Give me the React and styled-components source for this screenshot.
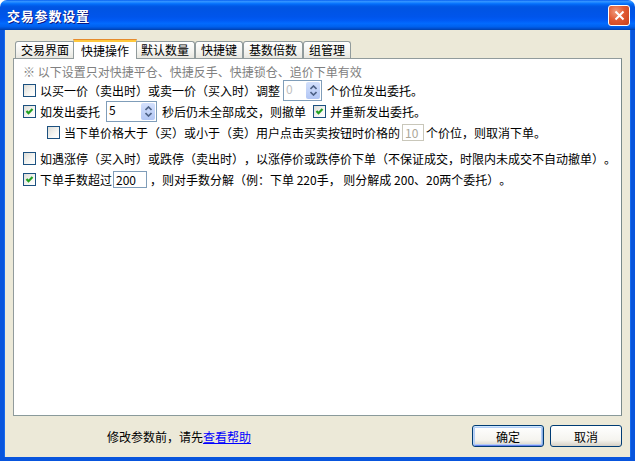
import React from 'react';
import styled, { createGlobalStyle, css } from 'styled-components';

const GlobalStyle = createGlobalStyle`
  html, body {
    margin: 0;
    padding: 0;
    background: #ffffff;
  }
  body {
    font-family: "Noto Sans CJK SC", "Liberation Sans", sans-serif;
    font-size: 12px;
    color: #000;
    text-spacing-trim: space-all;
  }
`;

const Window = styled.div`
  width: 635px;
  height: 461px;
  display: flex;
  flex-direction: column;
  box-sizing: border-box;
`;

const TitleBar = styled.div`
  height: 30px;
  flex: none;
  display: flex;
  align-items: center;
  justify-content: space-between;
  padding: 0 5px 0 7px;
  border-radius: 7px 7px 0 0;
  background: linear-gradient(
    to bottom,
    #0058ee 0%,
    #3593ff 4%,
    #288eff 7%,
    #127dff 10%,
    #036ffc 13%,
    #0262ee 17%,
    #0057e5 22%,
    #0054e3 28%,
    #0055eb 56%,
    #005bf5 68%,
    #026afe 78%,
    #0062ef 88%,
    #0052d6 94%,
    #0040ab 100%
  );
`;

const Title = styled.span`
  color: #fff;
  font-weight: bold;
  font-size: 13px;
  letter-spacing: 0.8px;
  text-shadow: 1px 1px 0 #0a1883;
`;

const CloseButton = styled.div`
  width: 22px;
  height: 21px;
  margin-top: 1px;
  border: 1px solid #fff;
  border-radius: 3px;
  box-sizing: border-box;
  background: radial-gradient(circle at 35% 30%, #f09a7c 0%, #e15a33 45%, #c8401a 100%);
  display: flex;
  align-items: center;
  justify-content: center;
`;

const Body = styled.div`
  flex: 1;
  display: flex;
  flex-direction: column;
  background: #ece9d8;
  border: 4px solid #0855dd;
  border-top: none;
  box-shadow: inset 1px 0 0 #166aee, inset -1px 0 0 #166aee;
  padding: 9px 9px 0 9px;
  min-height: 0;
`;

const TabStrip = styled.div`
  display: flex;
  align-items: flex-end;
  height: 19px;
  padding-left: 2px;
  position: relative;
  z-index: 1;
`;

const Tab = styled.div`
  height: 16px;
  line-height: 16px;
  padding: 0 5px;
  border: 1px solid #919b9c;
  border-bottom: none;
  border-radius: 3px 3px 0 0;
  background: linear-gradient(to bottom, #ffffff, #f3f3ef 60%, #e8e7e0);
  white-space: nowrap;

  ${(p) =>
    p.$active &&
    css`
      line-height: 18px;
      padding: 0 7px;
      margin: 0 -2px -1px;
      border-top: 3px solid #ffc83c;
      background: #fff;
      position: relative;
      z-index: 2;
      height: 17px;
      &::before {
        content: '';
        position: absolute;
        left: -1px;
        right: -1px;
        top: -3px;
        height: 1px;
        background: #e68b2c;
        border-radius: 3px 3px 0 0;
      }
    `}
`;

const Panel = styled.div`
  height: 358px;
  box-sizing: border-box;
  background: #fff;
  border: 1px solid #919b9c;
  border-right-color: #7a8a8b;
  border-bottom-color: #8a9a9b;
  padding: 5px 0 0 9px;
  display: flex;
  flex-direction: column;
`;

const Note = styled.div`
  height: 16px;
  line-height: 16px;
  color: #808080;
  white-space: nowrap;
`;

const Row = styled.div`
  display: flex;
  align-items: center;
  height: ${(p) => p.$h || 21}px;
  margin-left: ${(p) => p.$indent || 0}px;
  margin-top: ${(p) => p.$gap || 0}px;
  white-space: nowrap;
`;

const Box = styled.span`
  width: 13px;
  height: 13px;
  flex: none;
  box-sizing: border-box;
  border: 1px solid #1c5180;
  background: linear-gradient(135deg, #dcdcd7 0%, #f6f6f3 60%, #ffffff 100%);
  margin: 0 4px 0 ${(p) => p.$ml || 0}px;
  display: flex;
  align-items: center;
  justify-content: center;
`;

const Check = ({ checked, ml }) => (
  <Box $ml={ml}>
    {checked && (
      <svg width="9" height="9" viewBox="0 0 9 9">
        <path d="M1.5 4 L3.5 6.2 L7.5 2" fill="none" stroke="#21a121" strokeWidth="2.2" />
      </svg>
    )}
  </Box>
);

const SpinWrap = styled.span`
  display: inline-flex;
  height: 21px;
  box-sizing: border-box;
  border: 1px solid #7f9db9;
  background: #fff;
  margin: 0 ${(p) => p.$mr}px 0 ${(p) => p.$ml}px;
`;

const SpinText = styled.span`
  width: ${(p) => p.$w}px;
  padding-left: 2px;
  line-height: 15px;
  font-size: 12px;
  color: ${(p) => (p.$disabled ? '#c0c0c0' : '#000')};
  box-sizing: border-box;
`;

const SpinButton = styled.span`
  width: 14px;
  margin: 1px;
  border-radius: 2px;
  background: linear-gradient(to bottom, #d3e0fc, #b2c6f4);
  display: flex;
  align-items: center;
  justify-content: center;
`;

const Spinner = ({ value, textWidth, disabled, ml, mr }) => (
  <SpinWrap $ml={ml} $mr={mr}>
    <SpinText $w={textWidth} $disabled={disabled}>
      {value}
    </SpinText>
    <SpinButton>
      <svg width="7" height="11" viewBox="0 0 7 11">
        <path d="M0.5 4 L3.5 1 L6.5 4 M0.5 7 L3.5 10 L6.5 7" fill="none" stroke="#4d6185" strokeWidth="1.6" />
      </svg>
    </SpinButton>
  </SpinWrap>
);

const Field = styled.span`
  display: inline-block;
  width: ${(p) => p.$w}px;
  height: ${(p) => p.$h}px;
  line-height: ${(p) => p.$h - 2}px;
  box-sizing: border-box;
  border: 1px solid ${(p) => (p.$disabled ? '#c9c7ba' : '#7f9db9')};
  padding-left: 2px;
  color: ${(p) => (p.$disabled ? '#aca899' : '#000')};
  margin: 0 ${(p) => p.$mr}px 0 ${(p) => p.$ml}px;
`;

const Footer = styled.div`
  flex: 1;
  display: flex;
  align-items: center;
  padding-bottom: 1px;
`;

const Hint = styled.span`
  margin-left: 94px;
`;

const HelpLink = styled.a`
  color: #0000ff;
  text-decoration: underline;
  cursor: pointer;
`;

const Buttons = styled.div`
  margin-left: auto;
  display: flex;
  gap: 6px;
`;

const Button = styled.button`
  width: 72px;
  height: 22px;
  font-family: inherit;
  font-size: 12px;
  color: #000;
  border: 1px solid #003c74;
  border-radius: 3px;
  background: linear-gradient(to bottom, #ffffff 0%, #f5f4ef 70%, #d6d0c5 100%);
  padding: 0;
  ${(p) =>
    p.$default &&
    css`
      box-shadow: inset 0 1px 0 #cee7ff, inset 1px 0 0 #bcd4f6, inset -1px 0 0 #89ade4,
        inset 0 -1px 0 #6982ee, inset 0 0 0 2px #b3cdf6;
    `}
`;

const tabs = ['交易界面', '快捷操作', '默认数量', '快捷键', '基数倍数', '组管理'];

export default function App() {
  return (
    <>
      <GlobalStyle />
      <Window>
        <TitleBar>
          <Title>交易参数设置</Title>
          <CloseButton>
            <svg width="11" height="11" viewBox="0 0 11 11">
              <path d="M1.5 1.5 L9.5 9.5 M9.5 1.5 L1.5 9.5" stroke="#fff" strokeWidth="2" />
            </svg>
          </CloseButton>
        </TitleBar>
        <Body>
          <TabStrip>
            {tabs.map((t) => (
              <Tab key={t} $active={t === '快捷操作'}>
                {t}
              </Tab>
            ))}
          </TabStrip>
          <Panel>
            <Note>※ 以下设置只对快捷平仓、快捷反手、快捷锁仓、追价下单有效</Note>
            <Row>
              <Check />
              以买一价（卖出时）或卖一价（买入时）调整
              <Spinner value="0" textWidth={21} disabled ml={3} mr={5} />
              个价位发出委托。
            </Row>
            <Row>
              <Check checked />
              如发出委托
              <Spinner value="5" textWidth={33} ml={6} mr={5} />
              秒后仍未全部成交，则撤单
              <Check checked ml={7} />
              并重新发出委托。
            </Row>
            <Row $indent={24} $h={20}>
              <Check />
              当下单价格大于（买）或小于（卖）用户点击买卖按钮时价格的
              <Field $w={22} $h={17} $disabled $ml={2} $mr={2}>
                10
              </Field>
              个价位，则取消下单。
            </Row>
            <Row $gap={6} $h={20}>
              <Check />
              如遇涨停（买入时）或跌停（卖出时），以涨停价或跌停价下单（不保证成交，时限内未成交不自动撤单）。
            </Row>
            <Row $h={23}>
              <Check checked />
              下单手数超过
              <Field $w={34} $h={17} $ml={1} $mr={3}>
                200
              </Field>
              ，则对手数分解（例：下单 220手， 则分解成 200、20两个委托）。
            </Row>
          </Panel>
          <Footer>
            <Hint>
              修改参数前，请先<HelpLink>查看帮助</HelpLink>
            </Hint>
            <Buttons>
              <Button $default>确定</Button>
              <Button>取消</Button>
            </Buttons>
          </Footer>
        </Body>
      </Window>
    </>
  );
}
